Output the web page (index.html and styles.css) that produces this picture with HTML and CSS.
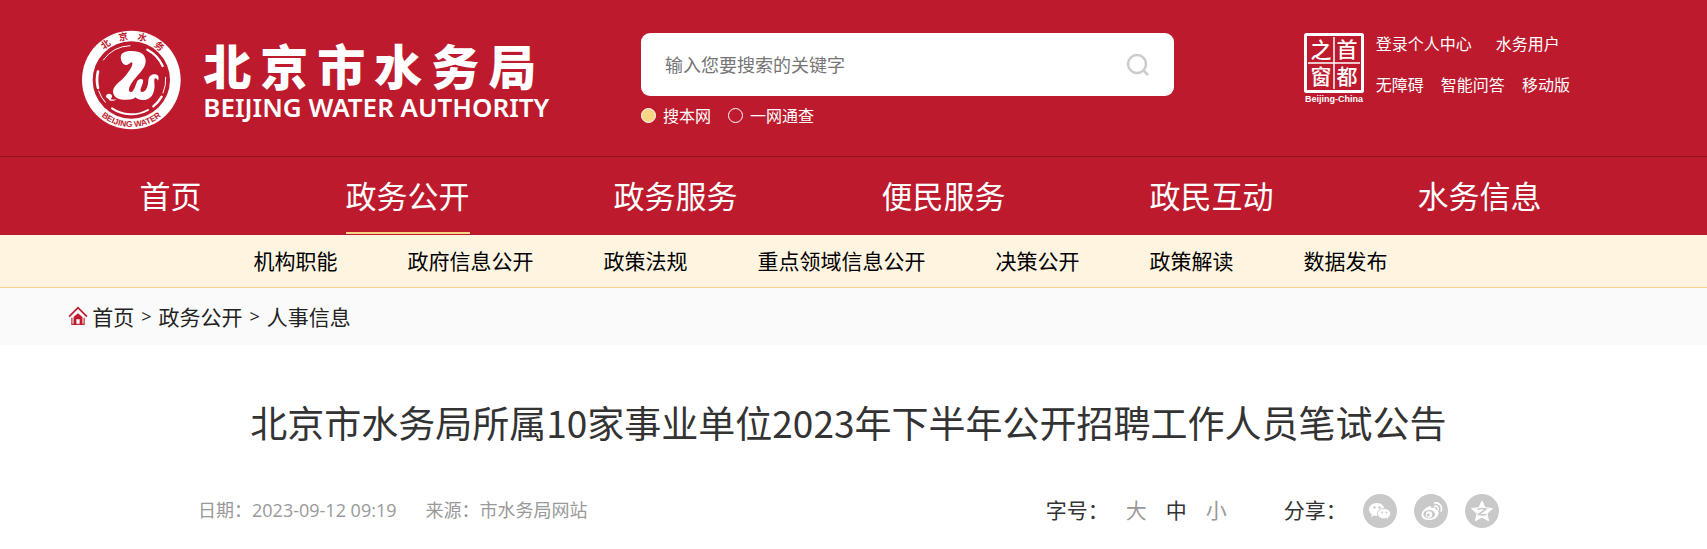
FILE: index.html
```html
<!DOCTYPE html>
<html lang="zh-CN">
<head>
<meta charset="utf-8">
<title>北京市水务局</title>
<link rel="stylesheet" href="styles.css">
</head>
<body>
<header class="header">
  <div class="masthead">
    <a class="logo" href="#" aria-label="北京市水务局">
      <svg class="emblem" viewBox="0 0 312 306" aria-hidden="true">
        <defs>
          <path id="arc-top" d="M32 153a122 122 0 0 1 244 0"/>
          <path id="arc-bottom" d="M13 153a141 141 0 0 0 282 0"/>
        </defs>
        <circle cx="154" cy="153" r="148" fill="#fff"/>
        <circle cx="154" cy="153" r="116" fill="#bd1a2d"/>
        <g fill="none" stroke="#fff" stroke-linecap="round">
          <path stroke-width="3" d="M70 93A103 103 0 0 1 150 50"/>
          <path stroke-width="7" d="M202 62A103 103 0 0 1 248 111"/>
          <path stroke-width="3" d="M257 145A103 103 0 0 1 249 192"/>
          <path stroke-width="7" d="M245 203A103 103 0 0 1 220 232"/>
          <path stroke-width="6" d="M204 243A103 103 0 0 1 96 238"/>
          <path stroke-width="8" d="M54 128A103 103 0 0 0 54 177"/>
          <path stroke-width="3" d="M56 186A103 103 0 0 0 76 220"/>
        </g>
        <path fill="#fff" d="M123 91C119 73 132 66 155 66c28 0 43 12 42 32-1 22-28 42-42 64-9 14-11 26-3 27 9 1 14-19 19-31 4-10 22-12 18 2-4 14-12 27-4 29 13 1 19-18 20-34 1-13 9-20 20-19 11 1 13 10 9 19-3-8-9-10-11-3-1 7 2 16 0 27-3 21-14 34-34 34-12 0-20-4-22-8-9 7-20 8-37 7-19-1-31-10-31-26 2-19 28-31 41-50 9-13 18-24 17-34-2-8-10 6-20 6-8-1-13-8-14-17z"/>
        <path fill="#fff" d="M78 202c0-9 16-11 18-1 1 5-3 6-4 10 6 1 11 1 18 0-10 6-20 6-24 0-2-4-8-3-8-9z"/>
        <g fill="#bd1a2d" text-anchor="middle">
          <text class="emblem-cn"><textPath href="#arc-top" startOffset="51%">北&#160;&#160;&#160;&#160;京&#160;&#160;&#160;&#160;水&#160;&#160;&#160;&#160;务</textPath></text>
          <text class="emblem-en"><textPath href="#arc-bottom" startOffset="50%">BEIJING WATER</textPath></text>
        </g>
      </svg>
      <span class="logo-text">
        <span class="logo-cn"><span>北</span><span>京</span><span>市</span><span>水</span><span>务</span><span>局</span></span>
        <span class="logo-en">BEIJING WATER AUTHORITY</span>
      </span>
    </a>
    <form class="search">
      <div class="search-box">
        <input class="search-input" type="text" placeholder="输入您要搜索的关键字" aria-label="输入您要搜索的关键字">
        <button class="search-button" type="button" aria-label="搜索">
          <svg viewBox="0 0 24 24" width="24" height="24" fill="none" stroke="#ccc" stroke-width="2.500"><circle cx="11" cy="11" r="9"/><path d="M17 17l5 5"/></svg>
        </button>
      </div>
      <div class="scopes">
        <label class="scope"><input type="radio" name="scope" checked>搜本网</label>
        <label class="scope"><input type="radio" name="scope">一网通查</label>
      </div>
    </form>
    <div class="tools">
      <a class="seal" href="#" aria-label="首都之窗">
        <svg viewBox="0 0 60 72" width="60" height="72">
          <rect x="1.500" y="1.500" width="57" height="57" rx="1" fill="none" stroke="#fff" stroke-width="3"/>
          <path d="M30 4v52M4 30h52" stroke="#fff" stroke-width="1.500"/>
          <g class="seal-cn"><text x="17" y="24">之</text><text x="43" y="24">首</text><text x="17" y="51">窗</text><text x="43" y="51">都</text></g>
          <text class="seal-en" x="30" y="69">Beijing-China</text>
        </svg>
      </a>
      <div class="tool-links">
        <div class="tool-row tool-row-wide"><a href="#">登录个人中心</a><a href="#">水务用户</a></div>
        <div class="tool-row"><a href="#">无障碍</a><a href="#">智能问答</a><a href="#">移动版</a></div>
      </div>
    </div>
  </div>
  <nav class="nav">
    <a href="#">首页</a><a class="active" href="#">政务公开</a><a href="#">政务服务</a><a href="#">便民服务</a><a href="#">政民互动</a><a href="#">水务信息</a>
  </nav>
</header>
<nav class="subnav">
  <a href="#">机构职能</a><a href="#">政府信息公开</a><a href="#">政策法规</a><a href="#">重点领域信息公开</a><a href="#">决策公开</a><a href="#">政策解读</a><a href="#">数据发布</a>
</nav>
<nav class="crumbs">
  <svg viewBox="0 0 18 18" width="20" height="20" aria-hidden="true"><path d="M1 9.500l8-8 8 8" fill="none" stroke="#bd1a2d" stroke-width="1.500"/><path d="M3.500 16.500v-6" stroke="#bd1a2d" stroke-width="1"/><path d="M14.500 16.500v-6" stroke="#bd1a2d" stroke-width="1"/><path d="M5 17v-7l4-3.500 4 3.500v7h-2.500v-5h-3v5z" fill="#bd1a2d"/><path d="M3 16.500h12" stroke="#bd1a2d"/></svg>
  <a href="#">首页</a><span class="sep">&gt;</span><a href="#">政务公开</a><span class="sep">&gt;</span><a href="#">人事信息</a>
</nav>
<main class="article">
  <h1 class="title">北京市水务局所属10家事业单位2023年下半年公开招聘工作人员笔试公告</h1>
  <div class="meta">
    <p class="source"><span>日期：2023-09-12 09:19</span><span>来源：市水务局网站</span></p>
    <div class="actions">
      <span>字号：</span>
      <div class="sizes"><button type="button">大</button><button class="current" type="button">中</button><button type="button">小</button></div>
      <span>分享：</span>
      <div class="share">
        <a href="#" aria-label="微信"><svg viewBox="0 0 34 34" width="34" height="34"><circle cx="17" cy="17" r="17" fill="#c9c9c9"/><path fill="#fff" d="M14 9c-4.400 0-8 2.800-8 6.500 0 2 1 3.700 2.800 4.900L8 23l3-1.500c1 .3 2 .4 3 .4C18.400 21.900 21.500 19 21.500 15.500S18.400 9 14 9z"/><path fill="#fff" stroke="#c9c9c9" d="M21 14.500c-3.800 0-6.500 2.400-6.500 5.200s2.700 5.200 6.500 5.200c.8 0 1.600-.1 2.300-.3l2.700 1.400-.7-2.400c1.500-.9 2.300-2.300 2.300-3.900 0-2.800-2.800-5.200-6.600-5.200z"/><g fill="#c9c9c9"><circle cx="11.500" cy="13.500" r="1.200"/><circle cx="16.500" cy="13.500" r="1.200"/><circle cx="19" cy="18.500" r=".9"/><circle cx="23.500" cy="18.500" r=".9"/></g></svg></a>
        <a href="#" aria-label="微博"><svg viewBox="0 0 34 34" width="34" height="34"><circle cx="17" cy="17" r="17" fill="#c9c9c9"/><path fill="#fff" d="M15 12.500c1.600-.6 2.600 0 2.300 1.600 2.700-1 5-.8 4.500 1.700 2 .6 3 1.700 2.800 3.600-.4 3.700-4.500 6.600-9.500 6.600-4.500 0-7.600-2-7.600-5.300 0-3.200 4-7.200 7.500-8.200z"/><ellipse cx="15.200" cy="20.300" rx="5.800" ry="4.200" fill="#c9c9c9"/><circle cx="15" cy="20.500" r="3.200" fill="#fff"/><circle cx="14.300" cy="21" r="1.500" fill="#c9c9c9"/><path fill="none" stroke="#fff" stroke-width="1.600" stroke-linecap="round" d="M20.500 9c5-.8 8.200 3.500 6.600 8M20.800 12.200c2.400-.4 3.900 1.400 3.200 3.700"/></svg></a>
        <a href="#" aria-label="QQ空间"><svg viewBox="0 0 34 34" width="34" height="34"><circle cx="17" cy="17" r="17" fill="#c9c9c9"/><path fill="#fff" stroke="#fff" stroke-linejoin="round" d="M17 7l3.100 6.700 7.400.8-5.500 5 1.500 7.200L17 23.100l-6.500 3.600 1.500-7.200-5.500-5 7.400-.8z"/><path fill="none" stroke="#c9c9c9" stroke-width="1.600" d="M12.500 15.200c3-.8 6-.8 8.500-.2l-7.500 5.500c3 .5 5.500.5 8 0"/></svg></a>
      </div>
    </div>
  </div>
</main>
</body>
</html>
```
FILE: styles.css
```css
* { box-sizing: border-box; }
body {
  margin: 0;
  background: #fff;
  color: #333;
  font-family: "Open Sans", "Noto Sans CJK SC", sans-serif;
}
a { color: inherit; text-decoration: none; }
svg { display: block; }
button { border: 0; padding: 0; background: none; font: inherit; color: inherit; cursor: pointer; }

.header { background: #bd1a2d; color: #fff; }
.masthead {
  display: grid;
  grid-template-columns: 573fr 663fr 335fr;
  align-items: start;
  min-height: 156px;
  padding: 29px 4% 0;
}
.logo { display: flex; gap: 19px; padding-left: 12px; }
.emblem { width: 104px; height: 102px; flex: none; }
.emblem-cn { font: 700 28px "Noto Sans CJK SC", sans-serif; }
.emblem-en { font: 700 25px "Liberation Sans", sans-serif; }
.logo-text { display: flex; flex-direction: column; padding-top: 5px; white-space: nowrap; }
.logo-cn { display: flex; gap: 9px; font: 900 48px/60px "Noto Sans CJK SC", sans-serif; }
.logo-en { font: 600 26px/26px "Noto Sans", sans-serif; }

.search { padding-top: 4px; width: 533px; max-width: 100%; }
.search-box {
  display: flex;
  align-items: center;
  height: 63px;
  padding: 0 24px;
  border-radius: 9px;
  background: #fff;
}
.search-input {
  flex: 1;
  min-width: 0;
  padding: 0 0 2px;
  border: 0;
  outline: 0;
  background: none;
  color: #333;
  font: 18px "Noto Sans CJK SC", sans-serif;
}
.search-input::placeholder { color: #757575; }
.scopes { display: flex; gap: 17px; padding-top: 7px; }
.scope { display: flex; align-items: center; gap: 7px; font: 16px/24px "Noto Sans CJK SC", sans-serif; }
.scope input {
  appearance: none;
  width: 15px;
  height: 15px;
  margin: 0;
  border: 1px solid #fff;
  border-radius: 50%;
}
.scope input:checked { background: #f8d584; }

.tools { display: flex; gap: 12px; padding-top: 4px; font: 16px/20px "Noto Sans CJK SC", sans-serif; white-space: nowrap; }
.seal-cn { fill: #fff; font: 500 21px "Noto Sans CJK SC", sans-serif; text-anchor: middle; }
.seal-en { fill: #fff; font: 700 9px "Liberation Sans", sans-serif; text-anchor: middle; }
.tool-links { display: flex; flex-direction: column; gap: 21px; }
.tool-row { display: flex; gap: 17px; }
.tool-row-wide { gap: 24px; }

.nav {
  display: flex;
  justify-content: center;
  gap: 144px;
  padding-right: 26px;
  border-top: 1px solid #92131f;
  font: 31px/75px "Noto Sans CJK SC", sans-serif;
  padding-bottom: 1px;
  white-space: nowrap;
}
.nav a { border-bottom: 2px solid transparent; }
.nav .active { border-color: #f8d584; }

.subnav {
  display: flex;
  justify-content: center;
  gap: 70px;
  padding: 0 66px 2px 0;
  border-bottom: 1px solid #fccf8b;
  background: #fef4e0;
  color: #000;
  font: 21px/50px "Noto Sans CJK SC", sans-serif;
  white-space: nowrap;
}
.crumbs {
  display: flex;
  align-items: center;
  padding: 0 4% 1px;
  background: #fafafa;
  color: #222;
  font: 21px/56px "Noto Sans CJK SC", sans-serif;
}
.crumbs svg { margin-right: 4px; }
.sep { margin: 0 7px; font-family: "Open Sans", sans-serif; font-size: 18px; }

.article { padding: 45px 12.2% 0 11.6%; }
.title { margin: 0 -8%; color: #333; text-align: center; font: 37px/64px "Noto Sans CJK SC", sans-serif; }
.meta { display: flex; justify-content: space-between; align-items: center; padding-top: 39px; }
.source { display: flex; gap: 29px; margin: 0; padding-bottom: 2px; color: #999; font-size: 18px; line-height: 32px; }
.actions { display: flex; align-items: center; font: 21px/32px "Noto Sans CJK SC", sans-serif; }
.actions > span, .sizes { padding-bottom: 3px; }
.sizes { display: flex; gap: 19px; margin: 0 57px 0 17px; color: #999; }
.sizes .current { color: #333; }
.share { display: flex; gap: 17px; margin-left: 16px; }
```
